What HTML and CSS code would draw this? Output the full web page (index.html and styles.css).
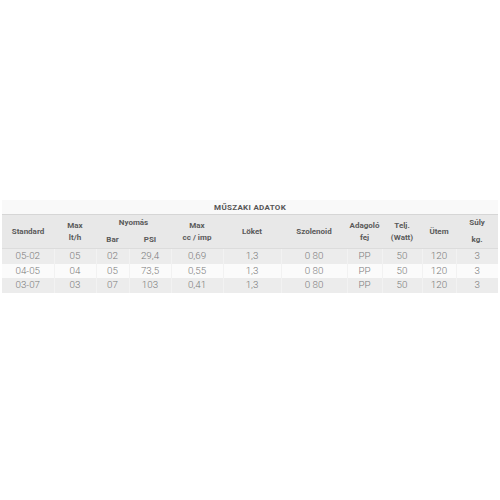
FILE: index.html
```html
<!DOCTYPE html>
<html lang="hu">
<head>
<meta charset="utf-8">
<title>Műszaki adatok</title>
<link rel="stylesheet" href="styles.css">
</head>
<body>
<div class="page">
  <table class="specs">
    <colgroup>
      <col class="c1"><col class="c2"><col class="c3"><col class="c4"><col class="c5"><col class="c6">
      <col class="c7"><col class="c8"><col class="c9"><col class="c10"><col class="c11">
    </colgroup>
    <thead>
      <tr class="title-row"><th colspan="11">MŰSZAKI ADATOK</th></tr>
      <tr class="head-row head-top">
        <th rowspan="2">Standard</th>
        <th rowspan="2">Max<br>lt/h</th>
        <th colspan="2">Nyomás</th>
        <th rowspan="2">Max<br>cc / imp</th>
        <th rowspan="2">Löket</th>
        <th rowspan="2">Szolenoid</th>
        <th rowspan="2">Adagoló<br>fej</th>
        <th rowspan="2">Telj.<br>(Watt)</th>
        <th rowspan="2">Ütem</th>
        <th>Súly</th>
      </tr>
      <tr class="head-row head-bottom">
        <th>Bar</th>
        <th>PSI</th>
        <th>kg.</th>
      </tr>
    </thead>
    <tbody>
      <tr class="odd"><td>05-02</td><td>05</td><td>02</td><td>29,4</td><td>0,69</td><td>1,3</td><td>0 80</td><td>PP</td><td>50</td><td>120</td><td>3</td></tr>
      <tr class="even"><td>04-05</td><td>04</td><td>05</td><td>73,5</td><td>0,55</td><td>1,3</td><td>0 80</td><td>PP</td><td>50</td><td>120</td><td>3</td></tr>
      <tr class="odd"><td>03-07</td><td>03</td><td>07</td><td>103</td><td>0,41</td><td>1,3</td><td>0 80</td><td>PP</td><td>50</td><td>120</td><td>3</td></tr>
    </tbody>
  </table>
</div>
</body>
</html>
```
FILE: styles.css
```css
html, body {
  margin: 0;
  padding: 0;
  background: #ffffff;
}

.page {
  padding: 200px 2px 0 2px;
  font-family: Roboto, "Liberation Sans", Arial, sans-serif;
}

.specs {
  width: 496px;
  border-collapse: collapse;
  table-layout: fixed;
}

.c1 { width: 52px; }
.c2 { width: 42px; }
.c3 { width: 33px; }
.c4 { width: 42px; }
.c5 { width: 52px; }
.c6 { width: 58px; }
.c7 { width: 66px; }
.c8 { width: 35px; }
.c9 { width: 40px; }
.c10 { width: 34px; }
.c11 { width: 42px; }

.specs th,
.specs td {
  padding: 0;
  text-align: center;
  vertical-align: middle;
}

.title-row th {
  height: 14px;
  background: #f9f9f9;
  color: #555555;
  font-size: 8px;
  font-weight: 700;
  letter-spacing: 0.3px;
  border-bottom: 1px solid #d6d6d6;
}

.head-row th {
  background: #e8e8e8;
  color: #5a5a5a;
  font-size: 8px;
  font-weight: 700;
  line-height: 12px;
}

.head-top th {
  height: 16px;
}

.head-bottom th {
  height: 17px;
}

.specs tbody td {
  height: 14.5px;
  font-size: 9.8px;
  font-weight: 300;
  color: #7a7a7a;
  line-height: 14px;
  border-left: 1px solid #f2f2f2;
}

.specs tbody td:first-child {
  border-left: none;
}

.specs tbody tr:first-child td {
  border-top: 1px solid #dcdcdc;
}

.odd td {
  background: #ececec;
}

.even td {
  background: #fbfbfb;
}
```
